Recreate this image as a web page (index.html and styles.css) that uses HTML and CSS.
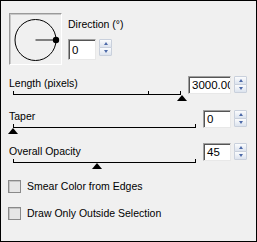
FILE: index.html
```html
<!DOCTYPE html>
<html lang="en">
<head>
    <meta charset="UTF-8">
    <title>Motion Blur</title>
    <link rel="stylesheet" href="styles.css">
</head>
<body>
    <div class="panel">
        <div class="direction">
            <div class="dial">
                <svg width="50" height="49" viewBox="0 0 50 49">
                    <circle cx="24.5" cy="25" r="20.5" fill="none" stroke="#000" stroke-width="1"/>
                    <line x1="24.5" y1="25" x2="45" y2="25" stroke="#808080" stroke-width="2"/>
                    <circle cx="45" cy="25" r="3.2" fill="#000"/>
                </svg>
            </div>
            <div class="dir-controls">
                <div class="label">Direction (°)</div>
                <div class="field">
                    <div class="num dir-num">0</div>
                    <div class="spin"><span class="up"></span><span class="down"></span></div>
                </div>
            </div>
        </div>

        <div class="group group-length">
            <div class="slider">
                <div class="label">Length (pixels)</div>
                <div class="track">
                    <div class="line"></div>
                    <div class="tick" style="left: 139px"></div>
                    <div class="thumb" style="left: 173px"></div>
                </div>
            </div>
            <div class="field">
                <div class="num wide">3000.00</div>
                <div class="spin"><span class="up"></span><span class="down"></span></div>
            </div>
        </div>

        <div class="group group-taper">
            <div class="slider">
                <div class="label">Taper</div>
                <div class="track">
                    <div class="line"></div>
                    <div class="thumb" style="left: 4px"></div>
                </div>
            </div>
            <div class="field">
                <div class="num">0</div>
                <div class="spin"><span class="up"></span><span class="down"></span></div>
            </div>
        </div>

        <div class="group group-opacity">
            <div class="slider">
                <div class="label">Overall Opacity</div>
                <div class="track">
                    <div class="line"></div>
                    <div class="thumb" style="left: 88px"></div>
                </div>
            </div>
            <div class="field">
                <div class="num">45</div>
                <div class="spin"><span class="up"></span><span class="down"></span></div>
            </div>
        </div>

        <div class="check check-first">
            <span class="box"></span>
            <span class="label">Smear Color from Edges</span>
        </div>
        <div class="check">
            <span class="box"></span>
            <span class="label">Draw Only Outside Selection</span>
        </div>
    </div>
</body>
</html>
```

FILE: styles.css
```css
body {
    margin: 0;
    font-family: 'Liberation Sans', Arial, sans-serif;
    font-size: 10.5px;
    color: #000;
}

.panel {
    width: 257px;
    height: 242px;
    box-sizing: border-box;
    border: 1px solid #000;
    background-color: #f0f0f0;
    padding: 12px 9px 0 8px;
}

.label {
    line-height: 13px;
    white-space: nowrap;
}

/* direction */

.direction {
    display: flex;
    align-items: flex-start;
}

.dial {
    width: 50px;
    height: 49px;
    border: 1px solid;
    border-color: #9a9a9a #ffffff #ffffff #9a9a9a;
    box-shadow: inset 1px 1px #c8c8c8;
    padding: 1px 0 0 1px;
}

.dial svg {
    display: block;
}

.dir-controls {
    margin-left: 6px;
    padding-top: 5px;
}

.dir-controls .field {
    margin-top: 8px;
}

/* number fields */

.field {
    display: flex;
    align-items: flex-start;
}

.num {
    width: 23px;
    height: 15px;
    border: 1px solid;
    border-color: #a0a0a0 #e8e8e8 #e8e8e8 #a0a0a0;
    box-shadow: inset 1px 1px #555;
    background-color: #fff;
    padding: 1px 0 0 3px;
    line-height: 15px;
    font-size: 11.5px;
    overflow: hidden;
    white-space: nowrap;
}

.dir-num {
    height: 18px;
    line-height: 18px;
}

.num.wide {
    width: 38px;
}

.spin {
    margin-left: 3px;
    width: 13px;
    display: flex;
    flex-direction: column;
}

.spin span {
    position: relative;
    height: 7px;
    border: 1px solid #c9d0dc;
    border-radius: 1px;
    background: linear-gradient(#fbfcfd, #dce3ee);
}

.spin span + span {
    margin-top: -1px;
}

.spin span::after {
    content: '';
    position: absolute;
    left: 4px;
    top: 2px;
    border-left: 2.5px solid transparent;
    border-right: 2.5px solid transparent;
}

.spin .up::after {
    border-bottom: 3px solid #4d6aa8;
}

.spin .down::after {
    border-top: 3px solid #4d6aa8;
}

/* sliders */

.group {
    display: flex;
    align-items: flex-start;
}

.slider {
    flex: 1;
    margin-right: 7px;
}

.group-length {
    margin-top: 12px;
}

.group-length .field {
    margin-top: -1px;
}

.group-taper {
    margin-top: 8px;
}

.group-opacity {
    margin-top: 10px;
}

.group-opacity .field {
    margin-top: -2px;
}

.track {
    position: relative;
    height: 12px;
}

.track .line {
    position: absolute;
    left: 4px;
    right: 0;
    top: 4px;
    height: 1px;
    background-color: #000;
}

.track .line::before,
.track .line::after {
    content: '';
    position: absolute;
    bottom: 0;
    width: 1px;
    height: 4px;
    background-color: #000;
}

.track .line::before {
    left: 0;
}

.track .line::after {
    right: 0;
}

.track .tick {
    position: absolute;
    top: 1px;
    width: 1px;
    height: 4px;
    background-color: #000;
}

.track .thumb {
    position: absolute;
    top: 5px;
    margin-left: -5px;
    border-left: 5.5px solid transparent;
    border-right: 5.5px solid transparent;
    border-bottom: 6px solid #000;
}

/* checkboxes */

.check {
    display: flex;
    align-items: center;
    margin-left: -1px;
    margin-top: 14px;
}

.check-first {
    margin-top: 10px;
}

.check .box {
    width: 11px;
    height: 11px;
    border: 1px solid #8a8a8a;
    box-shadow: inset 1px 1px #c4c4c4;
    background-color: #e6e6e6;
}

.check .label {
    margin-left: 6px;
}
```
